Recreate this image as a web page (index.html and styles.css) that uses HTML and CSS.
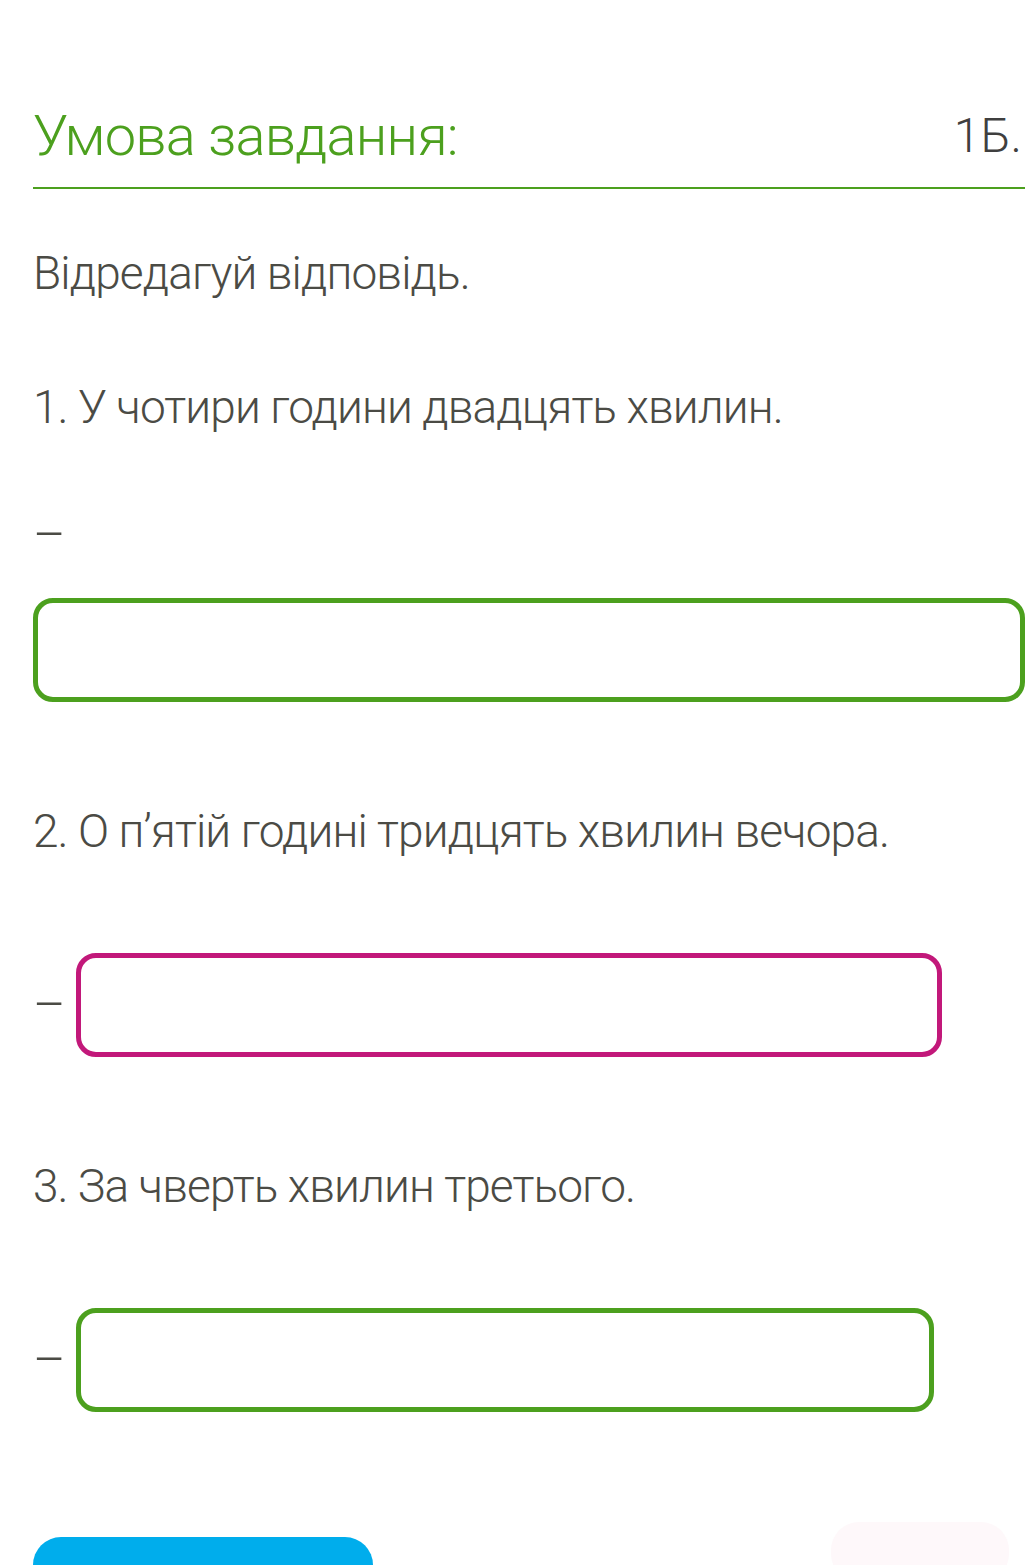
FILE: index.html
```html
<!DOCTYPE html>
<html lang="uk">
<head>
  <meta charset="UTF-8" />
  <title>Умова завдання</title>
  <link rel="stylesheet" href="styles.css">
</head>
<body>
<div class="container">
  <div class="task-header">
    <h2 class="task-title">Умова завдання:</h2>
    <span class="task-points">1Б.</span>
  </div>

  <p class="task-text intro">Відредагуй відповідь.</p>

  <p class="task-text item first">1. У чотири години двадцять хвилин.</p>
  <div class="dash-line">–</div>
  <div class="answer-box wide ok"></div>

  <p class="task-text item">2. О п’ятій годині тридцять хвилин вечора.</p>
  <div class="answer-row">
    <span class="dash">–</span>
    <div class="answer-box wrong" style="width: 866px"></div>
  </div>

  <p class="task-text item">3. За чверть хвилин третього.</p>
  <div class="answer-row">
    <span class="dash">–</span>
    <div class="answer-box ok" style="width: 858px"></div>
  </div>

  <div class="actions">
    <button class="btn-check"></button>
    <div class="btn-ghost"></div>
  </div>
</div>
</body>
</html>
```

FILE: styles.css
```css
body {
  margin: 0;
  background: #fff;
  font-family: Roboto, "Noto Sans", sans-serif;
  font-weight: 300;
  color: #4b4b45;
  overflow: hidden;
}
.container {
  padding: 104px 4px 0 33px;
  height: 1461px;
}
.task-header {
  display: flex;
  justify-content: space-between;
  align-items: flex-start;
  padding-bottom: 19px;
  border-bottom: 2px solid #4ca01e;
}
.task-title {
  margin: 0;
  font-size: 56px;
  line-height: 64px;
  font-weight: 300;
  letter-spacing: -0.8px;
  color: #4ca01e;
}
.task-points {
  font-size: 48px;
  line-height: 64px;
  color: #3f3f3f;
  margin-right: 3px;
}
.task-text {
  margin: 0;
  font-size: 46px;
  line-height: 60px;
  letter-spacing: -0.9px;
}
.intro {
  margin-top: 54px;
}
.item.first {
  margin-top: 74px;
}
.item {
  margin-top: 99px;
}
.dash-line {
  font-size: 50px;
  line-height: 60px;
  margin-top: 68px;
}
.answer-box {
  box-sizing: border-box;
  height: 104px;
  border: 5px solid #4ca01e;
  border-radius: 20px;
  background: #fff;
}
.answer-box.wide {
  width: 100%;
  margin-top: 33px;
}
.answer-box.wrong {
  border-color: #c2187a;
}
.answer-row {
  display: flex;
  align-items: center;
  gap: 14px;
  margin-top: 92px;
}
.dash {
  font-size: 50px;
  line-height: 60px;
  width: 29px;
}
.actions {
  display: flex;
  justify-content: space-between;
  align-items: flex-start;
  margin-top: 125px;
}
.btn-check {
  width: 340px;
  height: 80px;
  border: none;
  border-radius: 28px;
  background: #00adec;
}
.btn-ghost {
  width: 178px;
  height: 60px;
  margin: -15px 16px 0 0;
  border-radius: 28px;
  background: #fef8fa;
}
```
